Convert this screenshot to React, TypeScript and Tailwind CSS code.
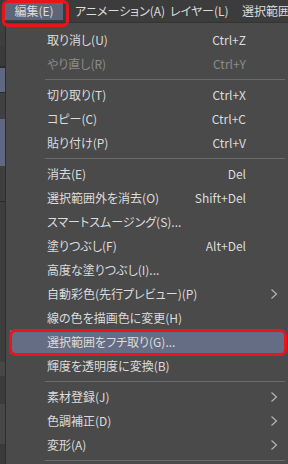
import React from 'react';

type Item =
  | { kind: 'sep' }
  | { kind: 'item'; label: string; shortcut?: string; sub?: boolean; disabled?: boolean; active?: boolean };

const items: Item[] = [
  { kind: 'item', label: '取り消し(U)', shortcut: 'Ctrl+Z' },
  { kind: 'item', label: 'やり直し(R)', shortcut: 'Ctrl+Y', disabled: true },
  { kind: 'sep' },
  { kind: 'item', label: '切り取り(T)', shortcut: 'Ctrl+X' },
  { kind: 'item', label: 'コピー(C)', shortcut: 'Ctrl+C' },
  { kind: 'item', label: '貼り付け(P)', shortcut: 'Ctrl+V' },
  { kind: 'sep' },
  { kind: 'item', label: '消去(E)', shortcut: 'Del' },
  { kind: 'item', label: '選択範囲外を消去(O)', shortcut: 'Shift+Del' },
  { kind: 'item', label: 'スマートスムージング(S)...' },
  { kind: 'item', label: '塗りつぶし(F)', shortcut: 'Alt+Del' },
  { kind: 'item', label: '高度な塗りつぶし(I)...' },
  { kind: 'item', label: '自動彩色(先行プレビュー)(P)', sub: true },
  { kind: 'item', label: '線の色を描画色に変更(H)' },
  { kind: 'item', label: '選択範囲をフチ取り(G)...', active: true },
  { kind: 'item', label: '輝度を透明度に変換(B)' },
  { kind: 'sep' },
  { kind: 'item', label: '素材登録(J)', sub: true },
  { kind: 'item', label: '色調補正(D)', sub: true },
  { kind: 'item', label: '変形(A)', sub: true },
  { kind: 'sep' },
];

function Chevron() {
  return (
    <svg width="8" height="12" viewBox="0 0 8 12" fill="none">
      <path d="M1.5 1.5 L6.5 6 L1.5 10.5" stroke="#b4b4b4" strokeWidth="1.2" />
    </svg>
  );
}

function SideStrip() {
  return (
    <div className="w-[6px] flex flex-col shrink-0 border-r border-[#2e2e2e]">
      <div className="h-[24px] bg-[#3e3e3e]" />
      <div className="h-[20px] bg-[#3a3a3a]" />
      <div className="h-[2px] bg-[#2c2c2c]" />
      <div className="h-[24px] bg-[#5e6882]" />
      <div className="h-[27px] bg-[#404040] border-t border-[#2c2c2c]" />
      <div className="h-[47px] bg-[#5e6882]" />
      <div className="h-[36px] bg-[#3f3f3f] border-b border-[#2a2a2a]" />
      <div className="h-[160px] bg-[#3d3d3d]" />
      <div className="h-[14px] bg-[#474747]" />
      <div className="h-[28px] bg-[#3b3b3b]" />
      <div className="h-[40px] bg-[#474747]" />
      <div className="flex-1 bg-[#3a3a3a]" />
    </div>
  );
}

export default function App() {
  return (
    <div
      className="relative w-[288px] h-[464px] overflow-hidden bg-[#3b3b3b] text-[12px] flex flex-col"
      style={{ fontFamily: '"Noto Sans CJK JP", "Liberation Sans", sans-serif', fontFeatureSettings: '"palt"' }}
    >
      {/* menu bar */}
      <div className="h-[22px] flex items-center text-[#dcdcdc] whitespace-nowrap shrink-0 bg-[#3c3c3c]">
        <div className="ml-[5px] h-[18px] w-[58px] shrink-0 bg-[#5d6579] flex items-center justify-center">編集(E)</div>
        <div className="shrink-0 pl-[12px] w-[107px]">アニメーション(A)</div>
        <div className="shrink-0 w-[72px]">レイヤー(L)</div>
        <div className="shrink-0">選択範囲(S)</div>
      </div>

      <div className="flex flex-1">
        <SideStrip />
        {/* dropdown */}
        <div className="flex-1 bg-[#4a4a4a] pt-[5px] border-t border-[#333]">
          {items.map((it, i) =>
            it.kind === 'sep' ? (
              <div key={i} className="h-[7px] flex items-center ml-[39px] mr-[3px]">
                <div className="h-px w-full bg-[#6b6b6b]" />
              </div>
            ) : (
              <div
                key={i}
                className={
                  'h-[24px] mx-[4px] flex items-center whitespace-nowrap ' +
                  (it.active ? 'bg-[#646d83] ' : '') +
                  (it.disabled ? 'text-[#8c8c8c]' : 'text-[#dcdcdc]')
                }
              >
                <span className="pl-[37px] flex-1">{it.label}</span>
                {it.shortcut && <span className="text-right">{it.shortcut}</span>}
                <span className="w-[38px] flex items-center pl-[24px]">{it.sub && <Chevron />}</span>
              </div>
            )
          )}
        </div>
      </div>

      {/* red annotation outlines */}
      <div className="absolute left-[2px] top-[0px] w-[67px] h-[27px] border-[3px] border-[#e8151d] rounded-[6px]" />
      <div className="absolute left-[9px] top-[329px] w-[278px] h-[27px] border-[3px] border-[#e8151d] rounded-[7px]" />
    </div>
  );
}
